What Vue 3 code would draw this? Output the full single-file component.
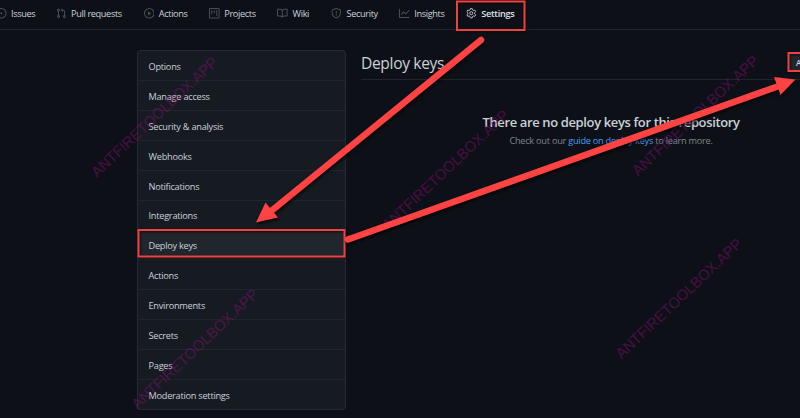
<script setup>
const tabs = [
  { label: 'Issues', width: 60, paths: ['M8 9.5a1.500 1.500 0 100-3 1.500 1.500 0 000 3z', 'M8 0a8 8 0 100 16A8 8 0 008 0zM1.500 8a6.500 6.500 0 1113 0 6.500 6.500 0 01-13 0z'] },
  { label: 'Pull requests', width: 87.700, paths: ['M7.177 3.073L9.573.677A.25.25 0 0110 .854v4.792a.25.25 0 01-.427.177L7.177 3.427a.25.25 0 010-.354zM3.750 2.500a.75.75 0 100 1.500.75.75 0 000-1.500zm-2.250.75a2.250 2.250 0 113 2.122v5.256a2.251 2.251 0 11-1.500 0V5.372A2.250 2.250 0 011.500 3.250zM11 2.500h-1V4h1a1 1 0 011 1v5.628a2.251 2.251 0 101.500 0V5A2.500 2.500 0 0011 2.500zm1 10.250a.75.75 0 111.500 0 .75.75 0 01-1.500 0zM3.750 12a.75.75 0 100 1.500.75.75 0 000-1.500z'] },
  { label: 'Actions', width: 65.500, paths: ['M1.500 8a6.500 6.500 0 1113 0 6.500 6.500 0 01-13 0zM8 0a8 8 0 100 16A8 8 0 008 0zM6.379 5.227A.25.25 0 006 5.442v5.117a.25.25 0 00.379.214l4.264-2.559a.25.25 0 000-.428L6.379 5.227z'] },
  { label: 'Projects', width: 68.300, paths: ['M1.750 0A1.750 1.750 0 000 1.750v12.500C0 15.216.784 16 1.750 16h12.500A1.750 1.750 0 0016 14.250V1.750A1.750 1.750 0 0014.250 0H1.750zM1.500 1.750a.25.25 0 01.25-.25h12.500a.25.25 0 01.25.25v12.500a.25.25 0 01-.25.25H1.750a.25.25 0 01-.25-.25V1.750zM11.750 3a.75.75 0 00-.75.75v7.500a.75.75 0 001.500 0v-7.500a.75.75 0 00-.75-.75zm-8.250.75a.75.75 0 011.500 0v5.500a.75.75 0 01-1.500 0v-5.500zM8 3a.75.75 0 00-.75.75v3.500a.75.75 0 001.500 0v-3.500A.75.75 0 008 3z'] },
  { label: 'Wiki', width: 54, paths: ['M0 1.750A.75.75 0 01.75 1h4.253c1.227 0 2.317.59 3 1.501A3.744 3.744 0 0111.006 1h4.245a.75.75 0 01.75.75v10.500a.75.75 0 01-.75.75h-4.507a2.250 2.250 0 00-1.591.659l-.622.621a.75.75 0 01-1.060 0l-.622-.621A2.250 2.250 0 005.258 13H.75a.75.75 0 01-.75-.75V1.750zm8.755 3a2.250 2.250 0 012.250-2.250H14.500v9h-3.757c-.71 0-1.400.201-1.992.572l.004-7.322zm-1.504 7.324l.004-5.073-.002-2.253A2.250 2.250 0 005.003 2.500H1.500v9h3.757a3.750 3.750 0 011.994.574z'] },
  { label: 'Security', width: 67.700, paths: ['M7.467.133a1.750 1.750 0 011.066 0l5.250 1.680A1.750 1.750 0 0115 3.480V7c0 1.566-.32 3.182-1.303 4.682-.983 1.498-2.585 2.813-5.032 3.855a1.700 1.700 0 01-1.330 0c-2.447-1.042-4.049-2.357-5.032-3.855C1.320 10.182 1 8.566 1 7V3.480a1.750 1.750 0 011.217-1.667l5.250-1.680zm.61 1.429a.25.25 0 00-.153 0l-5.250 1.680a.25.25 0 00-.174.238V7c0 1.358.275 2.666 1.057 3.860.784 1.194 2.121 2.340 4.366 3.297a.2.2 0 00.154 0c2.245-.956 3.582-2.104 4.366-3.298C13.225 9.666 13.500 8.360 13.500 7V3.480a.25.25 0 00-.174-.237l-5.250-1.680zM9 10.500a1 1 0 11-2 0 1 1 0 012 0zm-.25-5.750a.75.75 0 10-1.500 0v3a.75.75 0 001.500 0v-3z'] },
  { label: 'Insights', width: 67, paths: ['M1.500 1.750a.75.75 0 00-1.500 0v12.500c0 .414.336.75.75.75h14.500a.75.75 0 000-1.500H1.500V1.750zm14.280 2.530a.75.75 0 00-1.060-1.060L10 7.940 7.530 5.470a.75.75 0 00-1.060 0L3.220 8.720a.75.75 0 001.060 1.060L7 7.060l2.470 2.470a.75.75 0 001.060 0l5.250-5.250z'] },
  { label: 'Settings', width: 67, active: true, paths: [] },
]
const menu = ['Options', 'Manage access', 'Security & analysis', 'Webhooks', 'Notifications', 'Integrations', 'Deploy keys', 'Actions', 'Environments', 'Secrets', 'Pages', 'Moderation settings']
const marks = [[97, 178], [388, 231], [638, 176.500], [137.500, 410], [621.500, 359.500]]
</script>

<template>
  <div class="page">
    <nav class="tabs">
      <a v-for="t in tabs" :key="t.label" class="tab" :class="{ active: t.active }" :style="{ width: t.width + 'px' }">
        <svg v-if="!t.active" class="icon" viewBox="0 0 16 16"><path v-for="p in t.paths" :key="p" :d="p" fill-rule="evenodd" /></svg>
        <svg v-else class="icon gear" viewBox="0 0 16 16">
          <path d="M6.600.9h2.800l.5 2 1.300.75 2-.6 1.400 2.400-1.500 1.450v1.900l1.500 1.450-1.400 2.400-2-.6-1.300.75-.5 2H6.600l-.5-2-1.300-.75-2 .6-1.400-2.400 1.500-1.450V6.900L1.400 5.450l1.400-2.400 2 .6 1.300-.75z" />
          <circle cx="8" cy="7.850" r="2.300" />
        </svg>
        <span>{{ t.label }}</span>
      </a>
    </nav>

    <div class="body">
      <aside class="menu">
        <a v-for="m in menu" :key="m" class="row" :class="{ selected: m === 'Deploy keys' }">{{ m }}</a>
      </aside>
      <main class="content">
        <header class="head">
          <h2>Deploy keys</h2>
          <button class="add">Add deploy key</button>
        </header>
        <section class="blank">
          <h3>There are no deploy keys for this repository</h3>
          <p>Check out our <a>guide on deploy keys</a> to learn more.</p>
        </section>
      </main>
    </div>

    <svg class="overlay" viewBox="0 0 800 418">
      <g class="marks">
        <text v-for="(m, i) in marks" :key="i" :transform="`translate(${m[0]} ${m[1]}) rotate(-43.300)`" textLength="167" lengthAdjust="spacingAndGlyphs">ANTFIRETOOLBOX.APP</text>
      </g>
      <g class="boxes">
        <rect x="457" y="1.500" width="67.500" height="28.500" />
        <rect x="138.500" y="230" width="206" height="26.500" />
        <rect x="788.500" y="53" width="90" height="18" />
      </g>
      <g class="arrows">
        <path class="shaft" d="M481 40L270 212" />
        <path class="tip" d="M256 222.500L265.500 202.500L278 217.500Z" />
        <path class="shaft" d="M348 239.500L779 86" />
        <path class="tip" d="M795.500 79.500L774 77L780.500 95Z" />
      </g>
    </svg>
  </div>
</template>

<style>
body { background: #0d1117; overflow: hidden; }
</style>
<style scoped>
* { box-sizing: border-box; }
.page {
  position: relative;
  width: 800px;
  height: 418px;
  overflow: hidden;
  background: #0d1117;
  color: #c9d1d9;
  font-family: "Open Sans", "Noto Sans", sans-serif;
  font-size: 9.200px;
  letter-spacing: -0.250px;
}
.tabs {
  display: flex;
  height: 30px;
  padding-bottom: 2px;
  margin-right: -60px;
  border-bottom: 1px solid #21262d;
}
.tab {
  display: flex;
  flex: none;
  align-items: center;
  gap: 4.500px;
  white-space: nowrap;
  letter-spacing: -0.370px;
}
.tab:first-child { margin-left: -4px; }
.tab.active { font-weight: 600; color: #dbe2e8; letter-spacing: -0.300px; }
.icon { flex: none; width: 10.600px; height: 10.600px; fill: #484f58; }
.gear { fill: none; stroke: #b6bec7; stroke-width: 1.500; stroke-linejoin: round; }
.body { display: flex; gap: 15.500px; padding: 20px 0 0 137px; }
.menu {
  flex: none;
  width: 208.500px;
  height: 360px;
  border: 1px solid #262b32;
  border-radius: 4px;
  background: #161b22;
  overflow: hidden;
}
.row {
  display: flex;
  align-items: center;
  height: 29.920px;
  padding: 2px 0 0 10.500px;
  border-bottom: 1px solid #20252c;
}
.row:last-child { border-bottom: 0; }
.row.selected { background: #20262c; }
.content { flex: none; width: 500px; }
.head {
  display: flex;
  justify-content: space-between;
  align-items: center;
  height: 30px;
  padding-bottom: 4px;
  border-bottom: 1px solid #21262d;
}
h2 { margin: 0; font-size: 15.600px; font-weight: 400; line-height: 22px; letter-spacing: -0.350px; }
.add {
  width: 73px;
  height: 19px;
  padding: 0 0 0 7px;
  border: 1px solid #363b42;
  border-radius: 4px;
  background: #21262d;
  color: #c9d1d9;
  font: 600 8px "Open Sans", sans-serif;
  text-align: left;
}
.blank { padding-top: 32px; text-align: center; }
h3 { margin: 0; font-size: 13px; font-weight: 600; line-height: 20px; letter-spacing: -0.370px; }
p { margin: 2px 0 0; color: #7d858e; line-height: 14px; }
p a { color: #4c9bf5; }
.overlay { position: absolute; inset: 0; width: 800px; height: 418px; letter-spacing: 0; }
.marks { fill: #a00b85; fill-opacity: 0.420; font: 15px "Liberation Sans", sans-serif; }
.boxes { fill: none; stroke: #f04043; stroke-width: 2; filter: drop-shadow(1px 1px 1px #000a); }
.arrows { filter: drop-shadow(1px 2px 1.500px #000b); }
.shaft { fill: none; stroke: #ff4242; stroke-width: 6.500; stroke-linecap: round; }
.tip { fill: #ff4242; }
</style>
